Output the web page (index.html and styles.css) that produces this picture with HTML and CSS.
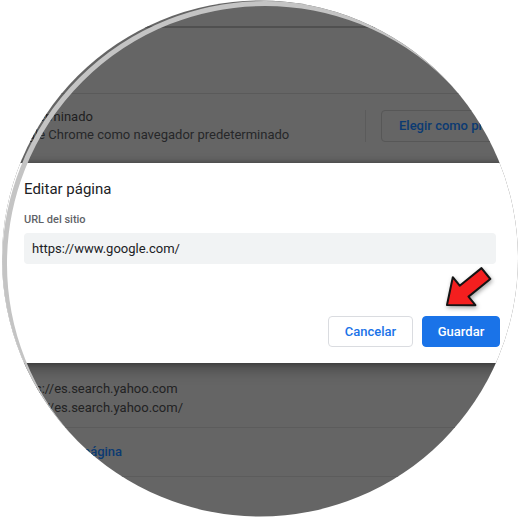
FILE: index.html
```html
<!DOCTYPE html>
<html lang="es">
<head>
<meta charset="utf-8">
<title>Editar página</title>
<link rel="stylesheet" href="styles.css">
</head>
<body>
<div class="lens">
  <div class="page">
    <div class="toolbar"></div>
    <div class="section-head"></div>
    <div class="row-default">
      <div class="default-text">
        <div class="primary">Navegador predeterminado</div>
        <div class="secondary">Establecer Google Chrome como navegador predeterminado</div>
      </div>
      <div class="sep"></div>
      <div class="btn-bg">Elegir como predeterminado</div>
    </div>
  </div>

  <div class="dialog">
    <div class="dialog-title">Editar página</div>
    <div class="field-label">URL del sitio</div>
    <div class="field-input">https://www.google.com/</div>
    <div class="dialog-actions">
      <div class="btn btn-cancel">Cancelar</div>
      <div class="btn btn-save">Guardar</div>
    </div>
  </div>

  <div class="below">
    <div class="row-page">
      <div class="page-title">https://es.search.yahoo.com</div>
      <div class="page-url">https://es.search.yahoo.com/</div>
    </div>
    <div class="row-add">
      <span class="add-link">Añadir una nueva página</span>
    </div>
  </div>

  <svg class="arrow" width="64" height="60" viewBox="0 0 64 60">
    <polygon points="11,47 39.4,47.2 32.5,38.6 54.3,21 45.5,10.1 23.7,27.7 16.8,19.2" fill="#f41f1f" stroke="#141414" stroke-width="2" stroke-linejoin="round"/>
  </svg>
</div>
</body>
</html>
```

FILE: styles.css
```css
* { box-sizing: border-box; }

html, body {
  margin: 0;
  padding: 0;
  background: #ffffff;
}

body {
  font-family: Roboto, "Noto Sans", "Liberation Sans", sans-serif;
  font-size: 13px;
}

.lens {
  position: relative;
  width: 520px;
  height: 520px;
  overflow: hidden;
  background: #656565;
  clip-path: circle(258px at 260px 258.5px);
}

.lens::after {
  content: "";
  position: absolute;
  left: 2px;
  top: 0.5px;
  width: 516px;
  height: 516px;
  border: 5px solid #c4c4c4;
  border-radius: 50%;
  pointer-events: none;
}

/* background settings page (under the modal overlay) */
.page {
  margin-left: -80px;
  width: 700px;
}

.toolbar {
  height: 28px;
  border-bottom: 2px solid #505050;
}

.section-head {
  height: 66px;
  border-bottom: 1px solid #5a5a5a;
}

.row-default {
  height: 69px;
  display: flex;
  align-items: flex-start;
  padding-left: 20px;
}

.default-text {
  flex: 0 0 425px;
  margin-top: 14px;
  line-height: 18px;
  white-space: nowrap;
}

.primary {
  color: #1e1e1f;
  margin-left: -5px;
}

.secondary { color: #262729; }

.sep {
  width: 1px;
  height: 32px;
  margin-top: 16px;
  background: #5b5b5b;
}

.btn-bg {
  margin-top: 16px;
  margin-left: 15px;
  height: 32px;
  line-height: 30px;
  padding: 0 17px;
  border: 1px solid #575757;
  border-radius: 4px;
  color: #0b3a72;
  font-weight: 500;
  white-space: nowrap;
}

/* dialog */
.dialog {
  position: relative;
  width: 520px;
  height: 200px;
  background: #ffffff;
  padding: 16px 20px 16px 24px;
  box-shadow: 0 0 6px rgba(0, 0, 0, 0.35), 0 6px 14px rgba(0, 0, 0, 0.3);
}

.dialog-title {
  font-size: 15px;
  line-height: 20px;
  color: #202124;
}

.field-label {
  margin-top: 13px;
  font-size: 11px;
  line-height: 16px;
  font-weight: 500;
  color: #5f6368;
}

.field-input {
  margin-top: 5px;
  width: 472px;
  height: 31px;
  line-height: 31px;
  padding-left: 8px;
  background: #f1f3f4;
  border-radius: 4px;
  color: #202124;
  font-size: 13px;
}

.dialog-actions {
  margin-top: 52px;
  display: flex;
  justify-content: flex-end;
  gap: 9px;
}

.btn {
  height: 31px;
  line-height: 29px;
  border-radius: 4px;
  font-weight: 500;
  font-size: 13px;
  text-align: center;
  border: 1px solid transparent;
}

.btn-cancel {
  width: 85px;
  border-color: #dadce0;
  color: #1a73e8;
  background: #ffffff;
}

.btn-save {
  width: 78px;
  background: #1a73e8;
  border-color: #1a73e8;
  color: #ffffff;
}

/* below the dialog */
.below {
  margin-left: -40px;
  width: 620px;
}

.row-page {
  height: 65px;
  padding-top: 16px;
  padding-left: 52px;
  line-height: 19px;
  border-bottom: 1px solid #5c5c5c;
  color: #222223;
  white-space: nowrap;
}

.row-add {
  height: 49px;
  padding-top: 14px;
  padding-left: 19px;
  line-height: 20px;
  border-bottom: 1px solid #5c5c5c;
}

.add-link {
  color: #0b3a72;
  font-weight: 500;
  white-space: nowrap;
}

.arrow {
  position: absolute;
  left: 436px;
  top: 258px;
  filter: drop-shadow(1px 2px 2px rgba(0, 0, 0, 0.35));
}
```
